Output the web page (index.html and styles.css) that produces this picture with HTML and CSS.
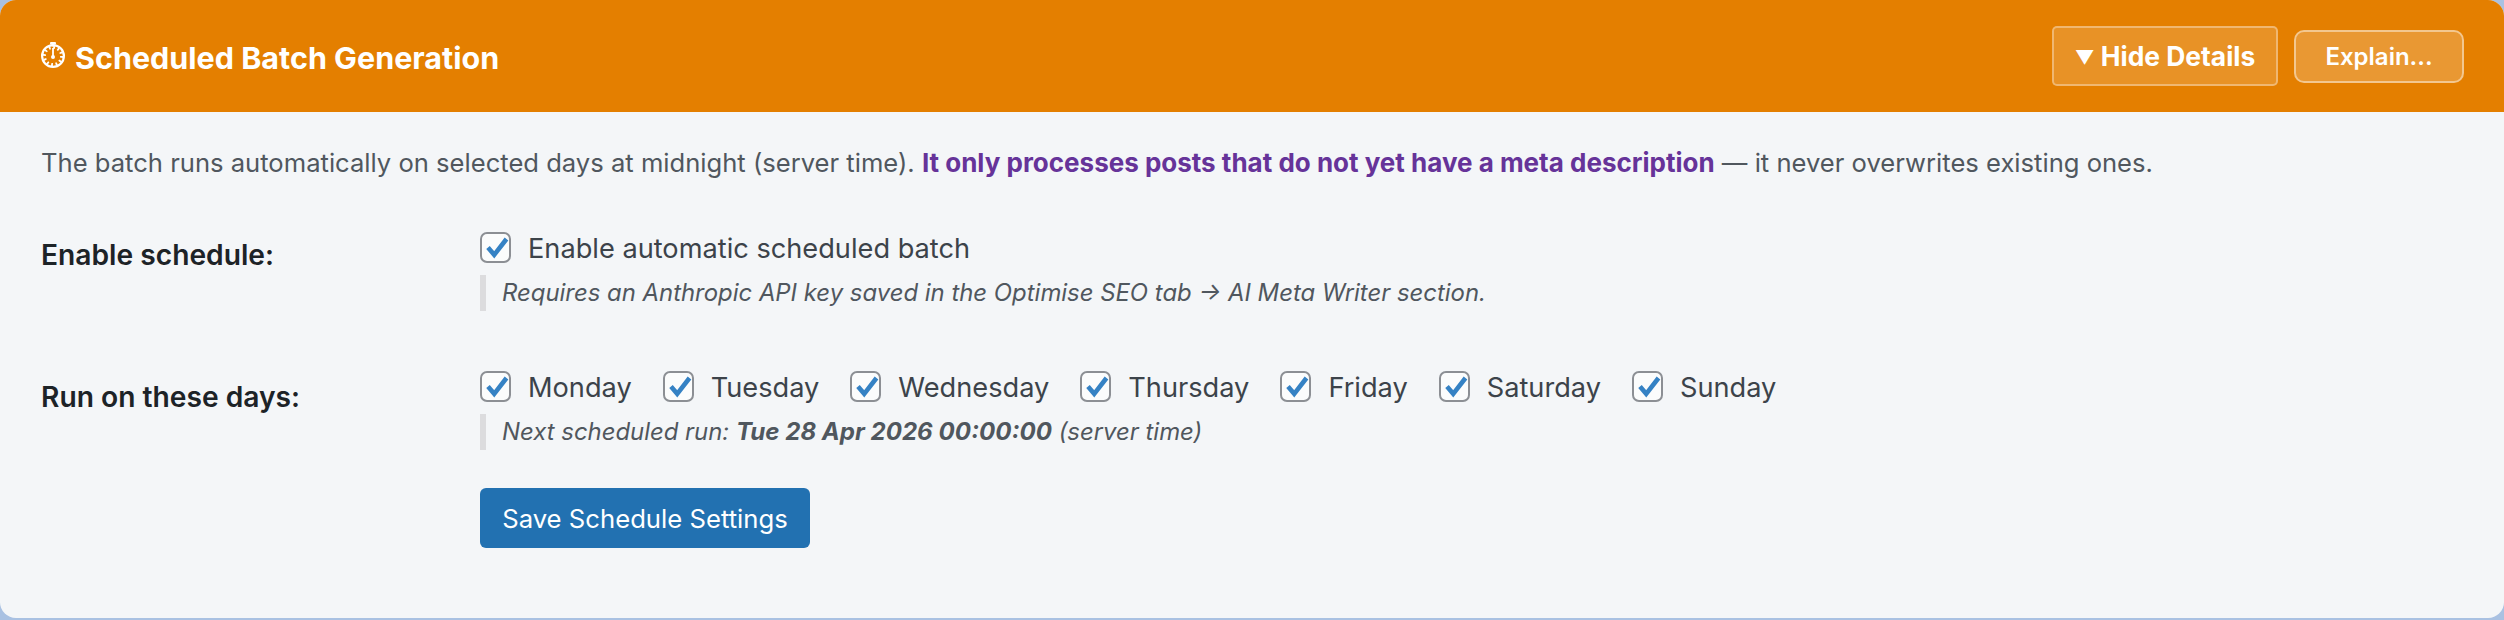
FILE: index.html
```html
<!DOCTYPE html>
<html lang="en">
<head>
  <meta charset="UTF-8">
  <meta name="viewport" content="width=device-width, initial-scale=1.0">
  <title>Scheduled Batch Generation</title>
  <link rel="stylesheet" href="styles.css">
</head>
<body>
  <svg class="defs" width="0" height="0">
    <symbol id="tick" viewBox="0 0 31 31">
      <path d="M8 15.5 L14.2 22.8 L26.5 7" fill="none" stroke="#3582c4" stroke-width="4.6"/>
    </symbol>
  </svg>

  <section class="card">
    <header class="card-head">
      <h2 class="card-title">
        <svg class="stopwatch" viewBox="0 0 24 26" width="24" height="26">
          <rect x="9" y="0" width="6" height="2.6" rx="1" fill="#fff"/>
          <rect x="11" y="1.5" width="2" height="3" fill="#fff"/>
          <circle cx="12" cy="14" r="10.9" fill="none" stroke="#fff" stroke-width="2.2"/>
          <circle cx="12" cy="14" r="8.6" fill="none" stroke="#fff" stroke-width="3" stroke-dasharray="1.8 2.7"/>
          <path d="M12 6 V15" stroke="#fff" stroke-width="1.8"/>
          <circle cx="12" cy="15" r="2" fill="#fff"/>
        </svg>
        Scheduled Batch Generation
      </h2>
      <div class="head-actions">
        <button class="head-btn toggle"><span class="caret">▼</span> Hide Details</button>
        <button class="head-btn explain">Explain...</button>
      </div>
    </header>

    <div class="card-body">
      <p class="intro">The batch runs automatically on selected days at midnight (server time). <strong>It only processes posts that do not yet have a meta description</strong> — it never overwrites existing ones.</p>

      <div class="row row-enable">
        <div class="row-label">Enable schedule:</div>
        <div class="row-field">
          <div class="checks">
            <label class="check"><span class="box"><svg><use href="#tick"/></svg></span>Enable automatic scheduled batch</label>
          </div>
          <p class="hint">Requires an Anthropic API key saved in the Optimise SEO tab → AI Meta Writer section.</p>
        </div>
      </div>

      <div class="row row-days">
        <div class="row-label">Run on these days:</div>
        <div class="row-field">
          <div class="checks">
            <label class="check"><span class="box"><svg><use href="#tick"/></svg></span>Monday</label>
            <label class="check"><span class="box"><svg><use href="#tick"/></svg></span>Tuesday</label>
            <label class="check"><span class="box"><svg><use href="#tick"/></svg></span>Wednesday</label>
            <label class="check"><span class="box"><svg><use href="#tick"/></svg></span>Thursday</label>
            <label class="check"><span class="box"><svg><use href="#tick"/></svg></span>Friday</label>
            <label class="check"><span class="box"><svg><use href="#tick"/></svg></span>Saturday</label>
            <label class="check"><span class="box"><svg><use href="#tick"/></svg></span>Sunday</label>
          </div>
          <p class="hint">Next scheduled run: <strong>Tue 28 Apr 2026 00:00:00</strong> (server time)</p>
          <button class="save-btn">Save Schedule Settings</button>
        </div>
      </div>
    </div>
  </section>
</body>
</html>
```

FILE: styles.css
```css
* {
  box-sizing: border-box;
  margin: 0;
  padding: 0;
}

html, body {
  height: 100%;
}

body {
  font-family: 'Inter', 'Liberation Sans', sans-serif;
  background-color: #a9c1e2;
  padding-bottom: 2px;
  overflow: hidden;
}

.defs {
  position: absolute;
}

.card {
  height: 618px;
  background-color: #f4f6f8;
  border-radius: 16px;
  overflow: hidden;
}

.card-head {
  display: flex;
  justify-content: space-between;
  align-items: center;
  height: 112px;
  padding: 0 40px 0 41px;
  background-color: #e47f00;
  color: #ffffff;
}

.card-title {
  display: flex;
  align-items: center;
  gap: 10px;
  font-size: 30.5px;
  font-weight: 700;
  padding-top: 2px;
}

.stopwatch {
  margin-top: -4px;
}

.head-actions {
  display: flex;
  align-items: center;
  gap: 16px;
}

.head-btn {
  font-family: inherit;
  color: #ffffff;
  cursor: pointer;
  border: 2px solid rgba(255, 255, 255, 0.35);
  background-color: rgba(255, 255, 255, 0.15);
}

.toggle {
  width: 226px;
  height: 60px;
  font-size: 26.4px;
  font-weight: 700;
  border-radius: 5px;
}

.caret {
  font-size: 19px;
  vertical-align: 2px;
}

.explain {
  width: 170px;
  height: 53px;
  font-size: 24px;
  font-weight: 600;
  border-color: rgba(255, 255, 255, 0.45);
  border-radius: 10px;
  background-color: rgba(255, 255, 255, 0.2);
}

.card-body {
  padding: 0 41px;
}

.intro {
  margin-top: 36px;
  font-size: 25.6px;
  line-height: 30px;
  color: #50575e;
}

.intro strong {
  color: #663399;
  font-size: 26px;
  font-weight: 700;
}

.row {
  display: grid;
  grid-template-columns: 439px 1fr;
}

.row-enable {
  margin-top: 54px;
}

.row-days {
  margin-top: 60px;
}

.row-label {
  padding-top: 9px;
  font-size: 28.2px;
  font-weight: 600;
  color: #1d2327;
}

.row-enable .row-label {
  padding-top: 6px;
}

.checks {
  display: flex;
  gap: 31px;
}

.check {
  display: flex;
  align-items: center;
  gap: 17px;
  height: 31px;
  padding-top: 2px;
  font-size: 27.2px;
  color: #3c434a;
}

.box {
  display: block;
  width: 31px;
  height: 31px;
  margin-bottom: 2px;
  border: 2px solid #8c8f94;
  border-radius: 7px;
  background-color: #fbfcfc;
}

.box svg {
  display: block;
  width: 31px;
  height: 31px;
  margin: -2px;
}

.hint {
  margin-top: 12px;
  padding-left: 16px;
  border-left: 6px solid #dcdcde;
  font-size: 23.9px;
  line-height: 36px;
  font-style: italic;
  color: #50575e;
}

.hint strong {
  font-size: 24.1px;
  font-weight: 700;
}

.save-btn {
  display: block;
  width: 330px;
  height: 60px;
  margin-top: 38px;
  font-family: inherit;
  font-size: 25.7px;
  color: #ffffff;
  cursor: pointer;
  border: none;
  border-radius: 6px;
  background-color: #2271b1;
}
```
